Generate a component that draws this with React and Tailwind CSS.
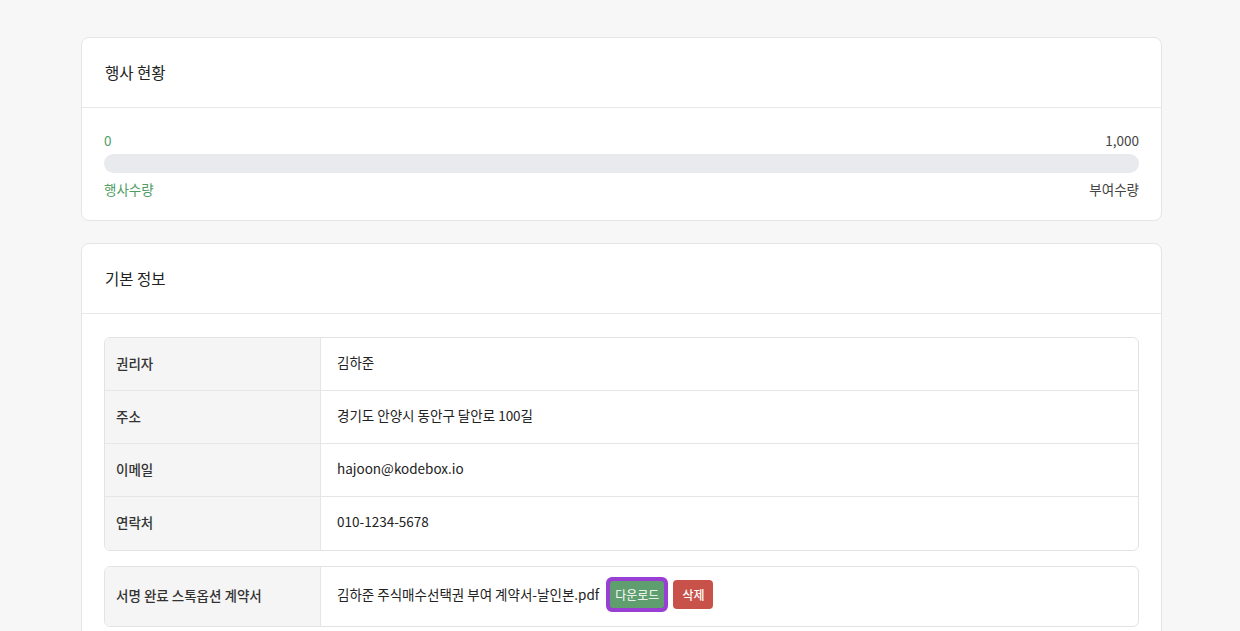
import React from 'react';

const font = { fontFamily: '"Noto Sans CJK KR", "Noto Sans", sans-serif' };

function Card({ title, children }) {
  return (
    <section className="bg-white border border-[#e5e5e5] rounded-lg">
      <div className="h-[70px] px-[23px] flex items-center border-b border-[#e8e8e8]">
        <h2 className="text-[15.5px] text-[#222]">{title}</h2>
      </div>
      <div className="pt-[23px] pb-6 px-[22px]">{children}</div>
    </section>
  );
}

function Row({ label, children, last }) {
  return (
    <div className={`flex flex-1 ${last ? '' : 'border-b border-[#e6e6e6]'}`}>
      <div className="w-[216px] shrink-0 bg-[#f5f5f5] border-r border-[#e6e6e6] px-[11px] pb-[2px] flex items-center text-[13.5px] font-medium text-[#333]">
        {label}
      </div>
      <div className="flex-1 px-4 pb-[4px] flex items-center text-[13.5px] text-[#222]">{children}</div>
    </div>
  );
}

export default function App() {
  const info = [
    ['권리자', '김하준'],
    ['주소', '경기도 안양시 동안구 달안로 100길'],
    ['이메일', 'hajoon@kodebox.io'],
    ['연락처', '010-1234-5678'],
  ];

  return (
    <div className="min-h-screen bg-[#f7f7f7] pt-[37px] pl-[81px]" style={font}>
      <div className="w-[1081px] flex flex-col gap-[22px]">
        <Card title="행사 현황">
          <div className="flex justify-between text-[13.5px] leading-[20px] mt-[-1px]">
            <span className="text-[#4f9d63]">0</span>
            <span className="text-[#444]">1,000</span>
          </div>
          <div className="h-[19px] rounded-full bg-[#e9eaee] mt-[4px]"></div>
          <div className="flex justify-between text-[13.5px] leading-[20px] mt-[6px] mb-[-3px]">
            <span className="text-[#4f9d63]">행사수량</span>
            <span className="text-[#444]">부여수량</span>
          </div>
        </Card>

        <Card title="기본 정보">
          <div className="border border-[#e3e3e3] rounded-md overflow-hidden">
            {info.map(([k, v], i) => (
              <div key={k} className="h-[53px] flex">
                <Row label={k} last={i === info.length - 1}>{v}</Row>
              </div>
            ))}
          </div>
          <div className="border border-[#e3e3e3] rounded-md overflow-hidden mt-[15px] h-[61px] flex">
            <Row label="서명 완료 스톡옵션 계약서" last>
              <span>김하준 주식매수선택권 부여 계약서-날인본.pdf</span>
              <button className="ml-[7px] rounded-md border-[4px] border-[#9a3fd4] p-0 bg-[#9a3fd4]">
                <span className="block bg-[#5f9e6e] text-white text-[12px] leading-[17px] px-[5px] py-[5px] rounded-[3px]">다운로드</span>
              </button>
              <button className="ml-[5px] bg-[#c8524a] text-white text-[12px] font-medium leading-[17px] px-[9px] py-[6px] rounded-[4px]">삭제</button>
            </Row>
          </div>
        </Card>
      </div>
    </div>
  );
}
